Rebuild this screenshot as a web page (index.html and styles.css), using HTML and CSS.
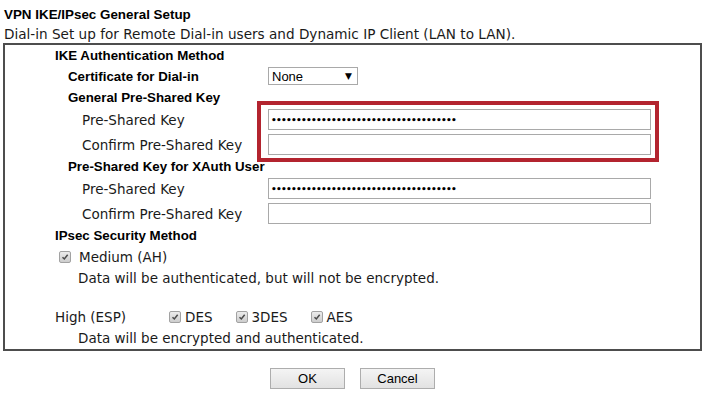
FILE: index.html
```html
<!DOCTYPE html>
<html lang="en">
<head>
    <meta charset="UTF-8">
    <title>VPN IKE/IPsec General Setup</title>
    <link rel="stylesheet" href="styles.css">
</head>
<body>
    <div class="page">
        <h1 class="title">VPN IKE/IPsec General Setup</h1>
        <p class="subtitle">Dial-in Set up for Remote Dial-in users and Dynamic IP Client (LAN to LAN).</p>

        <div class="panel">
            <div class="highlight"></div>

            <div class="row row-head lvl-1">IKE Authentication Method</div>
            <div class="row row-select">
                <span class="label bold lvl-2">Certificate for Dial-in</span>
                <div class="select">None <span class="arrow">&#9660;</span></div>
            </div>
            <div class="row row-head lvl-2">General Pre-Shared Key</div>
            <div class="row row-field">
                <span class="label lvl-3">Pre-Shared Key</span>
                <input class="key" type="text" value="•••••••••••••••••••••••••••••••••••••" readonly>
            </div>
            <div class="row row-field">
                <span class="label lvl-3">Confirm Pre-Shared Key</span>
                <input class="key" type="text" value="" readonly>
            </div>
            <div class="row row-head tight lvl-2">Pre-Shared Key for XAuth User</div>
            <div class="row row-field">
                <span class="label lvl-3">Pre-Shared Key</span>
                <input class="key" type="text" value="•••••••••••••••••••••••••••••••••••••" readonly>
            </div>
            <div class="row row-field">
                <span class="label lvl-3">Confirm Pre-Shared Key</span>
                <input class="key" type="text" value="" readonly>
            </div>

            <div class="row row-head tight lvl-1">IPsec Security Method</div>
            <div class="row row-check medium">
                <span class="check"><svg viewBox="0 0 12 12"><path d="M3 6.2 L5.2 8.4 L9.2 3.4"/></svg></span>
                <span class="opt-text">Medium (AH)</span>
            </div>
            <div class="row row-note first">Data will be authenticated, but will not be encrypted.</div>
            <div class="spacer"></div>
            <div class="row row-check high">
                <span class="high-label">High (ESP)</span>
                <div class="options">
                    <span class="option"><span class="check"><svg viewBox="0 0 12 12"><path d="M3 6.2 L5.2 8.4 L9.2 3.4"/></svg></span>DES</span>
                    <span class="option"><span class="check"><svg viewBox="0 0 12 12"><path d="M3 6.2 L5.2 8.4 L9.2 3.4"/></svg></span>3DES</span>
                    <span class="option"><span class="check"><svg viewBox="0 0 12 12"><path d="M3 6.2 L5.2 8.4 L9.2 3.4"/></svg></span>AES</span>
                </div>
            </div>
            <div class="row row-note">Data will be encrypted and authenticated.</div>
        </div>

        <div class="actions">
            <button class="btn">OK</button>
            <button class="btn">Cancel</button>
        </div>
    </div>
</body>
</html>
```

FILE: styles.css
```css
* {
    margin: 0;
    padding: 0;
    box-sizing: border-box;
}

body {
    font-family: 'DejaVu Sans', Verdana, sans-serif;
    font-size: 13.5px;
    color: #1a1a1a;
    background: #fff;
}

.page {
    width: 705px;
    padding-left: 3px;
}

.title {
    font-family: 'Liberation Sans', Arial, sans-serif;
    font-size: 13.4px;
    font-weight: bold;
    color: #000;
    line-height: 16px;
    padding-top: 7px;
    padding-left: 1px;
}

.subtitle {
    font-size: 13.6px;
    line-height: 16px;
    margin-top: 3px;
    padding-left: 1px;
}

.panel {
    position: relative;
    margin-top: 1px;
    width: 699px;
    border: 2px solid #4d4d4d;
    padding-bottom: 1px;
}

/* annotation frame drawn over the first key pair */
.highlight {
    position: absolute;
    left: 252px;
    top: 56px;
    width: 402px;
    height: 61px;
    border: 4px solid #b3242f;
    pointer-events: none;
}

.row {
    display: flex;
    align-items: center;
}

.row-head {
    height: 20px;
    font-family: 'Liberation Sans', Arial, sans-serif;
    font-size: 13.3px;
    font-weight: bold;
    color: #000;
}

.row-head.tight {
    height: 19px;
}

.row-select {
    height: 22px;
}

.row-field {
    height: 25px;
}

.label {
    width: 263px;
    flex-shrink: 0;
}

.bold {
    font-family: 'Liberation Sans', Arial, sans-serif;
    font-size: 13.3px;
    font-weight: bold;
    color: #000;
}

.lvl-1 { padding-left: 50px; }
.lvl-2 { padding-left: 63px; }
.lvl-3 { padding-left: 77px; }

.select {
    width: 90px;
    height: 18px;
    border: 1px solid #a9a9a9;
    display: flex;
    align-items: center;
    justify-content: space-between;
    padding: 0 5px 0 3px;
    font-family: 'Liberation Sans', Arial, sans-serif;
    font-size: 13px;
    color: #000;
}

.arrow {
    font-size: 9px;
    font-family: 'DejaVu Sans', sans-serif;
}

.key {
    width: 383px;
    height: 21px;
    border: 1px solid #a9a9a9;
    outline: none;
    padding: 0 2px;
    font-family: 'DejaVu Sans', sans-serif;
    font-size: 9px;
    font-weight: bold;
    letter-spacing: -0.75px;
    color: #000;
    background: #fff;
}

.row-check.medium {
    height: 24px;
    padding-left: 54px;
}

.row-check.high {
    height: 22px;
    padding-left: 50px;
}

.row-note {
    height: 20px;
    padding-left: 73px;
}

.row-note.first {
    height: 18px;
}

.spacer {
    height: 19px;
}

.check {
    width: 12px;
    height: 12px;
    border: 1px solid #a2a2a2;
    border-radius: 2px;
    background: linear-gradient(#ececec, #cdcdcd);
    display: inline-flex;
    flex-shrink: 0;
}

.check svg {
    width: 10px;
    height: 10px;
}

.check path {
    fill: none;
    stroke: #4a4a4a;
    stroke-width: 1.8;
}

.opt-text {
    margin-left: 8px;
}

.high-label {
    width: 114px;
}

.options {
    display: flex;
    gap: 23px;
}

.option {
    display: inline-flex;
    align-items: center;
    gap: 4px;
}

.actions {
    width: 699px;
    display: flex;
    justify-content: center;
    gap: 15px;
    margin-top: 17px;
}

.btn {
    width: 75px;
    height: 21px;
    border: 1px solid #adadad;
    background: linear-gradient(#f4f4f4, #e2e2e2);
    font-family: 'Liberation Sans', Arial, sans-serif;
    font-size: 13px;
    color: #000;
}
```
